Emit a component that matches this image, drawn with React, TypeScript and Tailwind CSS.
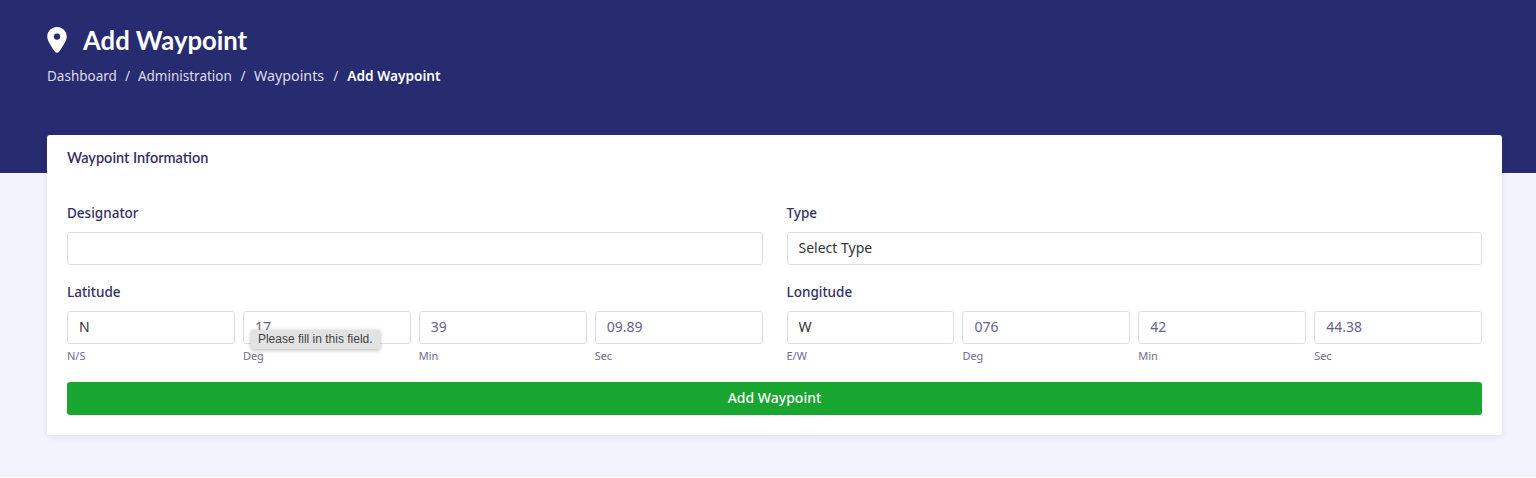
import React from 'react';

const fieldClass =
  'h-[33px] w-full rounded-[3px] border border-[#dddde9] bg-white px-[11px] pb-[2px] text-[14px] outline-none';

const CoordField = ({ value, hint, dark, children }: { value: string; hint: string; dark?: boolean; children?: React.ReactNode }) => (
  <div className="relative flex-1">
    <input readOnly value={value} className={`${fieldClass} ${dark ? 'text-[#32323a]' : 'text-[#655f8f]'}`} />
    <div className="mt-[5px] text-[11px] leading-[14px] text-[#6f6b92]">{hint}</div>
    {children}
  </div>
);

const Label = ({ children }: { children: React.ReactNode }) => (
  <label className="block h-[20px] text-[13.5px] leading-[20px] font-medium text-[#33305f]">{children}</label>
);

export default function App() {
  return (
    <div className="min-h-[477px] bg-[#f1f4fc] font-['Noto_Sans','Liberation_Sans',sans-serif]">
      <div className="h-[173px] bg-[#272b6f] px-[47px] pt-[24px] text-white">
        <div className="flex h-[32px] items-center gap-[16px]">
          <svg viewBox="0 0 384 512" className="h-[26px] w-[20px]" fill="currentColor">
            <path d="M192 0C86 0 0 84 0 188c0 70 49 152 147 296 22 32 68 32 90 0 98-144 147-226 147-296C384 84 298 0 192 0zm0 250a62 62 0 1 1 0-124 62 62 0 0 1 0 124z" />
          </svg>
          <h1 className="font-['Lato',sans-serif] text-[25.7px] leading-[32px] font-bold">Add Waypoint</h1>
        </div>
        <nav className="mt-[10px] flex items-center text-[13.5px] leading-[20px] text-[#dcdcea]">
          <span>Dashboard</span>
          <span className="px-[8px]">/</span>
          <span>Administration</span>
          <span className="px-[8.5px]">/</span>
          <span className="text-[14.3px]">Waypoints</span>
          <span className="px-[9px]">/</span>
          <span className="text-[13.7px] font-semibold text-white">Add Waypoint</span>
        </nav>
      </div>

      <div className="mr-[34px] ml-[47px] mt-[-38px] h-[300px] rounded-[3px] bg-white px-[20px] pt-[13px] shadow-[0_1px_6px_rgba(40,50,110,0.1)]">
        <h2 className="font-['Lato',sans-serif] text-[14.5px] leading-[20px] font-semibold text-[#33305f]">Waypoint Information</h2>

        <div className="mt-[35px] grid grid-cols-2 gap-x-[24px]">
          <div>
            <Label>Designator</Label>
            <input readOnly className={`${fieldClass} mt-[9px]`} />
          </div>
          <div>
            <Label>Type</Label>
            <div className={`${fieldClass} mt-[9px] flex items-center text-[#32323a]`}>Select Type</div>
          </div>
        </div>

        <div className="mt-[17px] grid grid-cols-2 gap-x-[24px]">
          <div>
            <Label>Latitude</Label>
            <div className="mt-[9px] flex gap-[8px]">
              <CoordField value="N" hint="N/S" dark />
              <CoordField value="17" hint="Deg">
                <div className="absolute top-[19px] left-[8px] rounded-[2px] bg-[#e2e2e2] px-[7px] py-[2px] font-['Liberation_Sans',sans-serif] text-[12px] leading-[15px] whitespace-nowrap text-[#444444] shadow-[0_1px_4px_rgba(0,0,0,0.3)]">
                  Please fill in this field.
                </div>
              </CoordField>
              <CoordField value="39" hint="Min" />
              <CoordField value="09.89" hint="Sec" />
            </div>
          </div>
          <div>
            <Label>Longitude</Label>
            <div className="mt-[9px] flex gap-[8px]">
              <CoordField value="W" hint="E/W" dark />
              <CoordField value="076" hint="Deg" />
              <CoordField value="42" hint="Min" />
              <CoordField value="44.38" hint="Sec" />
            </div>
          </div>
        </div>

        <button className="mt-[19px] h-[33px] w-full rounded-[3px] bg-[#18a530] pb-[2px] text-[14px] font-medium text-white">
          Add Waypoint
        </button>
      </div>
    </div>
  );
}
